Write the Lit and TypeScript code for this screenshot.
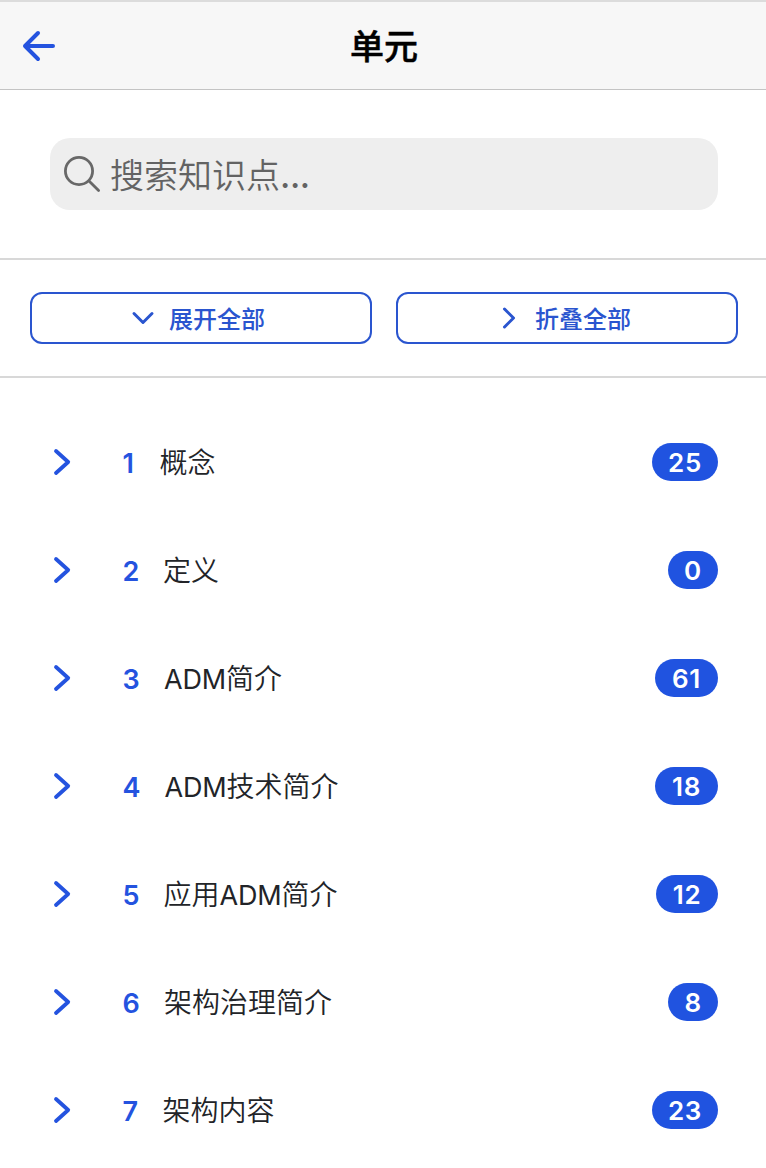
import { LitElement, html, css } from "lit";
import { customElement, property } from "lit/decorators.js";

interface Unit {
  no: number;
  name: string;
  count: number;
  width: number;
  gap: number;
}

const UNITS: Unit[] = [
  { no: 1, name: "概念", count: 25, width: 66, gap: 37 },
  { no: 2, name: "定义", count: 0, width: 50, gap: 40.5 },
  { no: 3, name: "ADM简介", count: 61, width: 63, gap: 41.5 },
  { no: 4, name: "ADM技术简介", count: 18, width: 63, gap: 42 },
  { no: 5, name: "应用ADM简介", count: 12, width: 62, gap: 41 },
  { no: 6, name: "架构治理简介", count: 8, width: 50, gap: 41.5 },
  { no: 7, name: "架构内容", count: 23, width: 66, gap: 40 },
];

@customElement("unit-row")
class UnitRow extends LitElement {
  @property({ attribute: false }) unit!: Unit;

  static styles = css`
    :host {
      display: flex;
      align-items: center;
      height: 108px;
      padding: 0 48px 0 52px;
      box-sizing: border-box;
    }
    .chevron {
      width: 20px;
      height: 28px;
      flex: none;
      margin-right: 50.5px;
      fill: none;
      stroke: #2453df;
      stroke-width: 3.8;
      stroke-linecap: round;
      stroke-linejoin: round;
    }
    .no {
      flex: none;
      color: #2453df;
      font: 600 27px/36px Inter, sans-serif;
      padding-top: 3px;
    }
    .name {
      flex: 1;
      padding-top: 2px;
      color: #222428;
      font: 350 28px/40px Inter, "Noto Sans CJK SC", sans-serif;
      white-space: nowrap;
    }
    .latin {
      font-size: 27px;
      font-weight: 400;
      letter-spacing: -0.15px;
    }
    .count {
      height: 38px;
      border-radius: 19px;
      background: #2053e0;
      color: #fff;
      font: 600 26px/40px Inter, sans-serif;
      letter-spacing: 0.6px;
      text-align: center;
    }
  `;

  render() {
    const { no, name, count, width, gap } = this.unit;
    const parts = name.split(/([A-Z]+)/).filter(Boolean);
    return html`
      <svg class="chevron" viewBox="0 0 20 28"><path d="M4 3l12.2 11L4 25" /></svg>
      <span class="no" style="width:${gap}px">${no}</span>
      <span class="name">${parts.map((p) => (/[A-Z]/.test(p) ? html`<span class="latin">${p}</span>` : p))}</span>
      <span class="count" style="width:${width}px">${count}</span>
    `;
  }
}

@customElement("app-root")
class AppRoot extends LitElement {
  static styles = css`
    :host {
      display: block;
      height: 1168px;
      overflow: hidden;
      background: #fff;
      font-family: Inter, "Noto Sans CJK SC", sans-serif;
    }
    .header {
      display: grid;
      grid-template-columns: 60px 1fr 58px;
      align-items: center;
      height: 90px;
      box-sizing: border-box;
      padding: 0 20px;
      border-top: 2px solid #dcdcdc;
      border-bottom: 1px solid #c4c4c4;
      background: #f7f7f7;
    }
    .back {
      width: 38px;
      height: 34px;
      fill: none;
      stroke: #2453df;
      stroke-width: 4;
      stroke-linecap: round;
      stroke-linejoin: round;
    }
    .title {
      margin: 0;
      padding-top: 3px;
      font-size: 34px;
      line-height: 44px;
      font-weight: 500;
      -webkit-text-stroke: 0.5px #000;
      text-align: center;
      color: #000;
    }
    .search {
      padding: 48px 48px 48px 50px;
      border-bottom: 2px solid #d8d8d8;
    }
    .field {
      display: flex;
      align-items: center;
      height: 72px;
      border-radius: 20px;
      background: #eeeeee;
      padding-left: 12px;
      box-sizing: border-box;
      color: #636363;
      font-size: 34px;
      font-weight: 350;
      line-height: 44px;
    }
    .hint {
      padding-top: 4px;
    }
    .dots {
      font-weight: 500;
      letter-spacing: -0.4px;
    }
    .glass {
      width: 40px;
      height: 40px;
      margin-right: 8px;
      fill: none;
      stroke: #686868;
      stroke-width: 2.8;
      stroke-linecap: round;
    }
    .actions {
      display: grid;
      grid-template-columns: 342px 342px;
      gap: 24px;
      padding: 32px 28px 32px 30px;
      border-bottom: 2px solid #d8d8d8;
    }
    .button {
      display: flex;
      align-items: center;
      justify-content: center;
      height: 52px;
      box-sizing: border-box;
      padding: 0 6px 0 0;
      border: 2px solid #2a55cf;
      border-radius: 12px;
      background: #fff;
      color: #2a55cf;
      font: 500 24px/32px "Noto Sans CJK SC", sans-serif;
    }
    .icon {
      width: 24px;
      height: 24px;
      margin-right: 14px;
      fill: none;
      stroke: #2a55cf;
      stroke-width: 3;
      stroke-linecap: round;
      stroke-linejoin: round;
    }
    .list {
      padding-top: 30px;
    }
  `;

  render() {
    return html`
      <header class="header">
        <svg class="back" viewBox="0 0 38 34"><path d="M18 4L5 17l13 13M5 17h28" /></svg>
        <h1 class="title">单元</h1>
      </header>
      <div class="search">
        <div class="field">
          <svg class="glass" viewBox="0 0 40 40">
            <circle cx="17" cy="17" r="13.6" /><path d="M27 27L36.6 36.6" />
          </svg>
          <span class="hint">搜索知识点<span class="dots">...</span></span>
        </div>
      </div>
      <div class="actions">
        <button class="button">
          <svg class="icon" viewBox="0 0 24 24"><path d="M3 7.5l9 9 9-9" /></svg>
          <span>展开全部</span>
        </button>
        <button class="button">
          <svg class="icon" viewBox="0 0 24 24"><path d="M7.5 3l9 9-9 9" /></svg>
          <span>折叠全部</span>
        </button>
      </div>
      <main class="list">
        ${UNITS.map((u) => html`<unit-row .unit=${u}></unit-row>`)}
      </main>
    `;
  }
}
